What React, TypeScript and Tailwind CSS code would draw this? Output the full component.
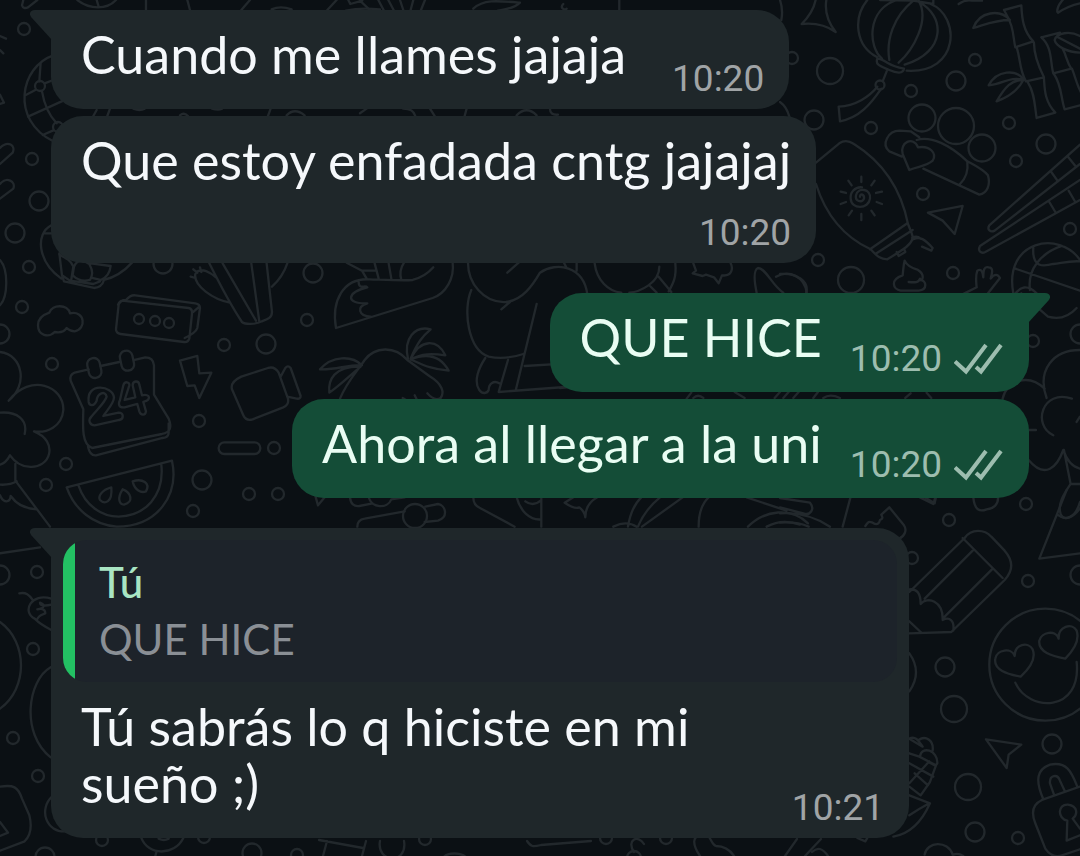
import React from "react";

interface Message {
  id: number;
  text: string;
  time: string;
  outgoing?: boolean;
  tail?: boolean;
  timeBelow?: boolean;
  quote?: { author: string; text: string };
}

const groups: Message[][] = [
  [
    { id: 1, text: "Cuando me llames jajaja", time: "10:20", tail: true },
    { id: 2, text: "Que estoy enfadada cntg jajajaj", time: "10:20", timeBelow: true },
  ],
  [
    { id: 3, text: "QUE HICE", time: "10:20", outgoing: true, tail: true },
    { id: 4, text: "Ahora al llegar a la uni", time: "10:20", outgoing: true },
  ],
  [
    {
      id: 5,
      text: "Tú sabrás lo q hiciste en mi sueño ;)",
      time: "10:21",
      tail: true,
      quote: { author: "Tú", text: "QUE HICE" },
    },
  ],
];

// cx, cy, r
const dots: [number, number, number][] = [
  [24, 29, 6], [32, 159, 6], [39, 201, 9.5], [15, 233, 9.5], [29, 267, 6],
  [163, 264, 9.5], [313, 273, 9.5], [792, 58, 6], [830, 71, 13], [975, 60, 6],
  [956, 81, 9.5], [911, 91, 6], [814, 120, 9.5], [871, 128, 6], [922, 118, 13.5],
  [956, 126, 18], [982, 148, 13.5], [1009, 123, 6], [1046, 144, 9.5], [1016, 161, 6],
  [923, 194, 6], [1070, 229, 6], [818, 260, 6], [851, 280, 13], [953, 273, 6],
  [22, 307, 6], [0, 334, 9.5], [52, 364, 6], [224, 345, 6], [266, 344, 9.5],
  [307, 320, 6], [199, 421, 6], [274, 448, 6], [66, 464, 6], [46, 485, 6],
  [202, 480, 9.5], [193, 511, 6], [249, 494, 6], [278, 494, 6], [139, 319, 5],
  [155, 321, 5], [169, 323, 5], [1033, 341, 6], [1080, 334, 9.5], [1026, 504, 6],
  [0, 575, 9.5], [37, 572, 6], [33, 649, 6], [13, 738, 6], [38, 776, 6],
  [102, 840, 6], [204, 837, 6], [45, 857, 9.5], [252, 853, 9.5], [297, 855, 6],
  [949, 520, 6], [912, 558, 6], [1028, 581, 6], [1080, 575, 9.5], [945, 667, 9.5],
  [954, 709, 13], [1052, 744, 9.5], [968, 787, 13], [975, 832, 9.5], [1018, 838, 6],
  [425, 839, 6], [606, 838, 6], [666, 838, 6], [40, 86, 5], [58, 127, 5],
  [880, 85, 4.5], [415, 516, 12], [634, 858, 7],
];

const Wallpaper: React.FC = () => (
  <svg
    viewBox="0 0 1080 856"
    preserveAspectRatio="xMidYMid slice"
    className="col-start-1 row-start-1 h-full w-full"
    fill="none"
    stroke="#22282c"
    strokeWidth={2.3}
    strokeLinecap="round"
    strokeLinejoin="round"
    aria-hidden="true"
  >
    {dots.map(([cx, cy, r]) => (
      <circle key={`${cx}-${cy}`} cx={cx} cy={cy} r={r} />
    ))}

    {/* top left: globe, cups, salad bowl */}
    <g transform="scale(.3333)" strokeWidth={7}>
      <path d="M70 0l-4 16q4 12 18 6L112 0M232 0q28 22 62 22T348 0M290 0l6 20M438 0v30M562 0l8 30M750 0l-26 30M815 28q26-12 60 0M1010 0l-28 30M1045 0l6 12 36-10M1080 2l30 28" />
      <path d="M1135 0l16 30M1165 0l16 30M1200 0l10 30M1240 0l-8 30M1275 0l-12 30M1140 28q-60-6-102 4M1420 26c30-28 70-24 140-18-20 20-50 20-66 24M1690 12c-10 10 0 20 10 14M1858 0v30" />
      <path d="M0 108l18 8M0 150l10 10M0 284l12 24-12 4" />
      <path d="M160 166C60 200 30 360 160 424M122 188l-4 56M126 274q10 60 44 96M76 286l30-16M134 250l26-10M84 350l106-48M128 405l32-14" />
      <path d="M0 444c24-24 48-8 38 14L0 492M0 552c20-24 48-8 40 14L0 596" />
      <path d="M154 676c-50 26-40 110 30 160M132 700h26M178 760l8 66 24 16 70 10 20-8M178 764c20 10 36 18 42 36l-6 38M222 800q14-30 46-8c12 22 10 34 2 48-20 6-40-2-52-14zM272 790l60 8c-2 20-14 36-30 42l-26-6M186 826l6 18 90 20q24-2 30-24 48-12 84-52" />
      <path d="M0 780c26 30 24 110 0 136" />
      <path d="M290 330l-10 18M330 326l-8 22M400 326q20 8 34 0M540 346q12-10 24 2M636 326q20 6 30 0M812 326l-8 22M860 346q24-24 54 0M1080 340l20-14M1210 326q30 0 36 22M1290 326l14 22M1400 326l-6 22M1550 346q30-30 60 0M1650 326q0 20 24 18" />
    </g>

    {/* top right: lantern, bamboo, crew, rugby ball, chopsticks */}
    <g transform="translate(780 0) scale(.3333)" strokeWidth={7}>
      <path d="M0 0q10 30 4 60M107 0q-8 38-42 72 60-6 102 24-36-46-28-96" />
      <path d="M262 0c-44 54-36 138 30 172M350 0C260 30 264 140 306 176M400 2C340 50 318 120 328 180M416 2C450 60 400 150 356 188M416 6c80 40 84 150-42 188M452 12c90 36 88 210-72 200M300 0l100 2 60 10V0" />
      <path d="M292 176c-8 20 14 24 36 34s42 12 44-4M292 176q10 0 30 12t50 18M320 214l-12 30M292 260c-24 30-66 58-116 60l4 44c58-10 92-52 124-98M536 12q20-14 40-10h30" />
      <path d="M580 84c18-50 80-58 110-24-44 0-70 12-110 24zM672 30l52-14c2 40 6 78 36 108l-54 18c-8-34-2-60-34-112M710 142c12 36 8 68 28 102l54-12c-20-40-30-70-30-104M744 248c20 30 20 70 26 106l56-16c-32-34-32-70-34-102" />
      <path d="M626 256c24-46 84-50 106-16-44-12-60 12-106 16zM730 240c-36 0-54 20-80 64 40-14 66-36 80-64zM784 112l56-14M784 112c34 30 26 72 36 108l54-14c-14-20-14-38-26-60M822 222c24 36 20 70 32 106l46-12M876 206c12 30 14 50 30 76M900 108c-30-16-70-10-76 12 4 20 40 36 76 38M834 112l66 34M832 36c-2-20 20-44 40-56M834 38q30-20 66-28" />
      <path d="M366 470l-38-16c-26-22-2-62 30-62l34 2 26 18M430 506l168 78c24-4 34-30 26-58-14-18-40-30-62-42-50-48-110-78-152-64M562 486c4 30-8 52-22 66M388 510l-20-48c-10-34 32-56 46-20 36-6 58 18 44 40-20 18-44 16-70 28z" />
      <path d="M108 488l70-58q20-14 44 2c80 50 140 130 162 240 10 26 16 36 14 44-6 18-20 28-76 62-20 0-30-8-50-30-82-38-134-100-164-196M270 748l112-78M286 762l112-72M350 756l6 12 20-12-4-10M400 718c20-10 34 0 58 26l-4 8-28-12M396 714q14-8 26 2" />
      <path d="M240 590c0-12 14-6 12 6-6 14-28 8-24-10 6-26 46-20 42 10-4 32-56 34-58 0-2-18 12-36 34-34M244 530v16M244 642v18M205 542l10 14M284 542l-10 14M182 575l16 4M306 575l-18 4M182 612l16-6M306 612l-16-6M206 646l10-14M284 646l-10-14" />
      <path d="M444 638l104-20-24 84-36-40zM900 434L628 676c-8 14 4 22 16 16L900 492M900 540L600 738c-8 16 4 24 16 18L900 600M814 516l20 28M864 470l24 30M808 606l18 30M866 572l20 34" />
      <path d="M374 782c6 14 20 22 40 28 22 14 14 34 6 30 20 0 24 30-4 32h-54c-24-4-32-34 6-46 2-16 2-30 6-44zM420 836c-4 12-14 12-34 10" />
      <path d="M590 862c-2-20-4-34 2-50 14-8 16 6 18 20 0-20 2-34 16-30 16 0 10 20 6 34 12-16 22-14 28-2l-36 46 12 22M590 862l-44 22M700 880c-30-160 140-190 200-100M706 806l194 66M750 870c-8-60 30-110 96-132M760 744c-4 60 30 56 60 48 30-4 50-10 80-8M700 890q30-50 70-10" />
      <path d="M0 822c50-4 90 22 78 60M0 306q20 14 28 44" />
    </g>

    {/* left: cloud, speaker, calendar, camera, melon, tree */}
    <g transform="translate(0 260) scale(.3333)" strokeWidth={7}>
      <path d="M148 158c8-26 56-26 62 2 46-10 50 48 14 54-14 0-18-4-24-10-10 16-26 14-36 12-18 18-50 12-50-20 0-20 16-32 34-38z" />
      <path d="M366 122l200 22q12 2 10 18l-8 74q-4 12-16 10l-190-24q-14-2-14-14l8-74q4-14 22-14q14-16 28-14l180 24q14 2 14 14l-8 60q-4 14-38 30M580 156l18-16M366 122q-6 0-12 12" />
      <path d="M628 10c30 60 60 120 98 176 10 8 40 8 60-2 16-6 30-10 30-28l-16-146M668 10l100 172M754 10l24 174M862 10c-10 30-24 50-46 70M690 128c-50-10-110-50-104-86 16-26 50 0 62 10M572 50l14 4M580 28l12 10M600 22l4 14" />
      <path d="M250 448L212 362q-4-18 12-24l42-10M302 318l56-12M404 300l32-8q24 0 26 24v88l44 72c10 26 6 40-20 46l-210 42c-30-10-28-60-26-116M506 490v28q0 14-18 16l-200 52q-18 2-24-26" />
      <rect x="264" y="294" width="38" height="60" rx="18" transform="rotate(-12 283 324)" />
      <rect x="362" y="272" width="38" height="60" rx="18" transform="rotate(-12 381 302)" />
      <path d="M266 426c-8-60 72-50 76-14 0 20-24 42-32 56l46-10c16 0 16 20 2 22l-74 16c-16 0-20-16-10-26 20-24 42-44 46-60-4-20-28-10-30 12-8 18-22 16-24 4zM370 376c4-14 20-10 18 0l-14 44 32-8-8-36c0-14 18-16 20-2l8 32c26-6 28 14 4 20l8 28c-2 14-16 12-20 0l-6-22-38 10c-18 2-20-10-14-22z" />
      <path d="M540 302l52-14 6 52 36-2-36 76-14-38-22 2zM724 350l80-26q20-6 32 14l28 78q4 18-14 26l-92 36q-20 6-28-12l-34-78q-6-22 28-38zM842 350l14-26q8-10 16 0l30 84q0 10-12 8l-28-6" />
      <rect x="656" y="547" width="125" height="35" rx="17" />
      <path d="M200 682l316-80c22 102-42 198-166 198-70-6-126-50-150-118zM236 678c20 60 70 92 120 92 80-2 138-64 128-156" />
      <path d="M334 682c-30 8-40 28-34 38 14 14 38 8 34-38zM368 688c-16 24-12 46 4 46 30-8 22-36-4-46zM398 664c6 28 26 36 40 30 14-24-10-40-40-30z" />
      <path d="M0 276c70 8 84 100 26 146 66-84 166-44 164 28-4 50-50 70-88 64 76 30 50 114-16 106-28-2-46-20-56-34-10 20-20 24-30 28M0 458c50-4 84 20 74 64M46 612v50l104 138M0 674q30 2 50-10M0 706c10 24 30 24 32 2 14 20 40 38 78 40M0 880l120-18" />
    </g>

    {/* middle strip: bird, volcano, plants, elephant */}
    <g transform="translate(290 240) scale(.3333)" strokeWidth={7}>
      <path d="M138 264c-14-80 20-150 100-146 60 2 100 4 130 2 30-8 50-24 62-38M138 264l290-90c40-14 66-60 60-106M170 68l46 24 14 24M216 92h38M254 70l12 46M296 70l8 46M334 120c-6-20 0-40 8-52M206 126c0 24 20 8 26 16-60 14-70 50 0 48-34 10-26 38 10 40" />
      <path d="M150 476c20-50 50-80 74-116 30-40 90-44 128 0l66 48c40 24 46 50 34 66-14 8-30-2-40-14M216 376c-30-30-90-30-126 12 50 2 80-14 126-12zM212 380c-80-2-98 40-94 78 30-20 60-50 94-78zM354 356c-14-60 20-100 68-88-24 20-40 40-60 88 30-60 80-60 104-10-40-6-70-6-104 12 50-20 90-10 114 34-50-4-70-14-114-34M338 474l10 6M374 466l6 12" />
      <path d="M534 68c0 60 46 122 114 118 50-6 80-50 102-88 50-34 130-20 142 64M544 150c-26 60-10 180 52 200 40 8 80 0 104-8M634 208l26-22M652 98l34-30M586 354c-20 30-36 70-18 96 10 14 24 10 28 0 0-20 16-30 32-20M654 360l-28 96 240-18M740 192l-62 256M704 378l130-8M822 68l8 16M860 68v24" />
    </g>
    <g transform="translate(560 260) scale(.3333)" strokeWidth={7}>
      <path d="M104 10c6 50 40 84 80 88M346 10c4 40-6 60-20 84M298 20c0 50-60 76-90 78M296 50l38 46M270 78l20 20M400 10l8 22-10 8 30 8 10-4 24 8 14 18 10-24c30 4 34-20 26-36" />
      <path d="M590 98C582 60 580 30 594 24c24 0 40 50 76 74M648 50c40-22 86 0 92 48M20 310H0M0 384l40-4M380 416l14-18M400 414q14-14 30 0M524 396l30 18M644 414l16-18M670 414l16-18M700 414l16-18M760 414l14-18M790 414q20-14 50 0M1036 414l16-14M1100 398l14 16" />
      <path d="M1384 100l80 70q50 14 86-26M1560 270c-80 0-130 60-100 144M1328 416c10-50 74-80 126-30M1536 416c-90-30-120 80-56 110M1560 470l-10 16M1406 600c50 60 86 20 104-30 10 30 24 50 50 56M1512 570l20 102h28M1532 672c-20 30-40 60-30 90 10 24 40 10 60-20M1408 510h20" />
      <path d="M1240 712c4 40 20 44 40 36 20-2 36-14 34-36M1094 712l30 18 4-18" />
    </g>
    <g transform="translate(300 480) scale(.3333)" strokeWidth={7}>
      <path d="M44 40l10 36 20-24M150 52c2 20 12 28 28 26l40-8M206 52c8 32 56 36 68 6l40-6M172 140c0-14 8-22 22-24l120-22M376 80l38-8c24 4 32 40 0 50l-40 4M520 52c0 20 10 28 20 32l104 56M650 52c10 40 40 70 74 66M676 64q24 18 48-4M724 52v88M794 68q30 20 44 14 16 12 18 30 0-40 36-60M794 68l26-16M984 140q10-60 40-88M1014 140q20-50 66-88M1026 140l122-88M940 140q40-20 70 0M1196 140q0-60 30-88M1340 52l120 40M1344 140c50-50 130-60 180-10M1400 140c40-20 70-16 100-6" />
    </g>

    {/* bottom left */}
    <g transform="translate(0 500) scale(.3333)" strokeWidth={7}>
      <path d="M0 366c84 60 84 200 0 260M152 502c-70 40-90 200 0 270M58 280c20-4 30 4 40 20M154 296c-60-20-90 40-50 60 10 10 30 24 50 34M110 360c10-20 20-16 26-20 0-16-16-14-24-12 24-4 24-14 8-20 0 10 18 10 34 6M0 860c40-6 54 0 66 36l22 50c10 40 0 64-14 78L0 1052M0 966l24 32-24 10M156 890c-40 36-20 110 44 104M424 1014c20 54 100 54 126 0M470 1054l-4 14M476 1016q16 8 30 0" />
    </g>
    <path d="M327 841l-4 15M319 840l44 8M366 841l-4 15M380 841c-4 22 28 24 24 0M527 841c4 6 6 6 14 4l50-4M443 858c4-6 18-6 24 0M634 852c-8-12 4-18 10-8M700 856c-8-12-8-20 2-22 10 0 8 10 14 12 8 0 14 4 18 10M785 856l12-17M805 856l16-17M812 852q8-8 16 4" />

    {/* bottom right: pencil, emoji, corn, lock */}
    <g transform="translate(780 490) scale(.3333)" strokeWidth={7}>
      <path d="M0 24l90 14c16 20 0 40-20 32L0 52M0 70q80-6 150 40M0 98q50-4 86 12M212 20l-24 90M420 22l40 20 6-20M256 108c10-14 10-14 22-10 16 10 20 0 22-8 10-4 8-8 4-16l24-22 44 54c10 14 2 32-14 40" />
      <path d="M388 306l166-162c20-30 60-26 80-4l40 42c26 30 26 60 0 88L514 426l-126 4M548 144l120 120M434 326l144-144M488 386l148-148M388 298q34-4 34 44c20-24 68-10 66 48 20-10 36 0 32 32M388 394l34 32" />
      <path d="M860 0L778 206l122-16M836 76c20 16 50 10 64-40M388 490q40 56 0 114" />
      <circle cx="796" cy="524" r="168" />
      <path d="M722 560c-40-8-82-20-76-54 4-28 50-34 58-8 0-36 40-44 54-20 12 30-12 60-36 82zM856 506c-40-8-82-20-78-54 6-26 50-34 58-6-2-36 40-50 54-24 10 30-12 62-34 84zM706 578c40 90 200 90 184-62" />
      <path d="M618 748l106 16-38 30-6 40zM388 746c20-10 30 10 40 24l-40-24M416 750c20-14 46 0 42 32M420 800c4-34 54-20 52 20-8 14-14 0-24-2M388 790l30 10 50 26-18 50-28 40-34-26M388 820l72 40M388 880l60-66M404 850l40 36M388 916l62 24c-24 54-60 92-110 100M388 976q30-20 60-36M232 1044l24 10 6-10M434 1094c6-40 70-44 84 0M520 1094q14-6 30 4" />
      <path d="M790 928c-26-60-18-90 20-104 50-10 64 20 82 66M822 914l-12-34c-2-24 22-30 30-8l14 30M786 930l114-40M786 930c-30 14-32 40-20 70l30 76q20 30 50 20l54-18M862 992c-30-6-30-50 2-48 30 4 30 30 14 42l22 30M862 992l-2 60 40-16" />
    </g>
  </svg>
);

const Tail: React.FC<{ outgoing?: boolean }> = ({ outgoing }) => (
  <svg
    width="22"
    height="30"
    viewBox="0 0 22 30"
    className={
      outgoing
        ? "absolute top-0 -right-[21px] -scale-x-100 fill-[#144d37]"
        : "absolute top-0 -left-[21px] fill-[#1f272a]"
    }
    aria-hidden="true"
  >
    <path d="M22 0H5C0 0-1.500 4 1.500 7.500L22 30Z" />
  </svg>
);

const Ticks: React.FC = () => (
  <svg
    width="50"
    height="32"
    viewBox="0 0 50 32"
    fill="none"
    stroke="currentColor"
    strokeWidth={4}
    role="img"
    aria-label="Entregado"
  >
    <path d="M1 18.500L12 28.500L32 2M22 24L27 28.500L47 2" />
  </svg>
);

const Bubble: React.FC<{ message: Message }> = ({ message }) => {
  const { text, time, outgoing, tail, timeBelow, quote } = message;
  const side = outgoing
    ? "self-end bg-[#144d37] text-[#e9fdf3]"
    : "self-start bg-[#1f272a] text-[#f5f8fb]";
  const corner = tail ? (outgoing ? "rounded-tr-none" : "rounded-tl-none") : "";
  const row = timeBelow
    ? "flex-col items-end gap-4"
    : outgoing
      ? "items-end justify-between gap-7"
      : "items-end justify-between gap-[46px]";

  return (
    <article
      className={`relative flex max-w-[858px] flex-col rounded-[32px] ${side} ${corner}`}
    >
      {tail && <Tail outgoing={outgoing} />}
      {quote && (
        <blockquote className="mx-3 mt-3 flex overflow-hidden rounded-3xl bg-[#1d232a]">
          <div className="w-3 bg-[#23c063]" />
          <div className="px-6 py-[14px] text-[42px] leading-[57px]">
            <p className="font-medium text-[#a9e5c3]">{quote.author}</p>
            <p className="text-[#8a8f95]">{quote.text}</p>
          </div>
        </blockquote>
      )}
      <div className={`flex pt-4 pr-[25px] pb-[14px] pl-[30px] ${row}`}>
        <p className="mb-3 text-[52px] leading-[57px]">{text}</p>
        <div
          className={`flex items-end gap-3 font-[Roboto,sans-serif] text-[37px] leading-8 ${
            outgoing ? "mb-[3px] text-[#9dbdaf]" : "text-[#a0a4a6]"
          }`}
        >
          <time>{time}</time>
          {outgoing && <Ticks />}
        </div>
      </div>
    </article>
  );
};

const App: React.FC = () => (
  <div className="grid min-h-screen overflow-hidden bg-[#0b1014] font-[Lato,sans-serif]">
    <Wallpaper />
    <main className="relative col-start-1 row-start-1 flex flex-col gap-[30px] px-[51px] pt-[10px] pb-4">
      {groups.map((group) => (
        <section key={group[0].id} className="flex flex-col gap-[7px]">
          {group.map((message) => (
            <Bubble key={message.id} message={message} />
          ))}
        </section>
      ))}
    </main>
  </div>
);

export default App;
